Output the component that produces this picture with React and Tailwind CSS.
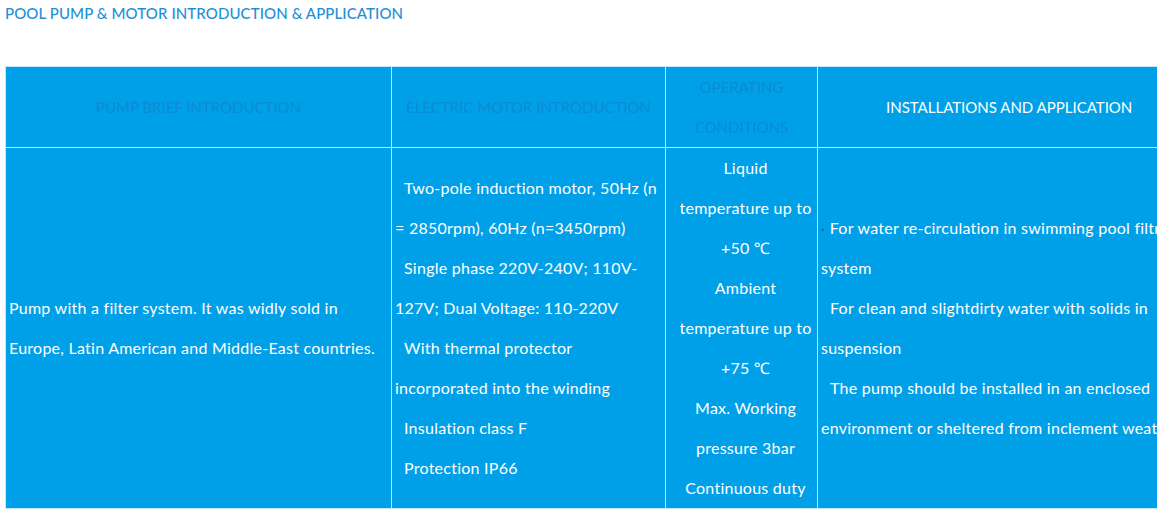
const FONT = { fontFamily: 'Lato, "Noto Sans", sans-serif' };

const motor = [
  'Two-pole induction motor, 50Hz (n = 2850rpm), 60Hz (n=3450rpm)',
  'Single phase 220V-240V; 110V-127V; Dual Voltage: 110-220V',
  'With thermal protector incorporated into the winding',
  'Insulation class F',
  'Protection IP66',
];

const install = [
  'For clean and slightdirty water with solids in suspension',
  'The pump should be installed in an enclosed environment or sheltered from inclement weather',
];

export default function App() {
  return (
    <div className="w-[1166px] h-[514px] bg-white overflow-hidden" style={FONT}>
      <h2 className="pl-[5px] pt-[3px] text-[15px] leading-[20px] font-medium text-[#1e8fd6] tracking-[0.1px]">
        POOL PUMP &amp; MOTOR INTRODUCTION &amp; APPLICATION
      </h2>

      <div className="mt-[43px] ml-[5px] w-[1152px] overflow-hidden">
        <table className="table-fixed border-collapse w-[1222px] bg-[#00a0e8] text-[16px] leading-[40px] text-white tracking-[0.25px]">
          <colgroup>
            <col className="w-[386px]" />
            <col className="w-[274px]" />
            <col className="w-[152px]" />
            <col className="w-[410px]" />
          </colgroup>
          <thead className="text-[15px] tracking-normal">
            <tr className="h-[81px]">
              <th className="border border-[#c6e6f8] font-normal text-[#0b8bd3] px-[4px]">PUMP BRIEF INTRODUCTION</th>
              <th className="border border-[#c6e6f8] font-normal text-[#0b8bd3] px-[4px]">ELECTRIC MOTOR INTRODUCTION</th>
              <th className="border border-[#c6e6f8] font-normal text-[#0b8bd3] px-[20px]">OPERATING CONDITIONS</th>
              <th className="border border-[#c6e6f8] font-normal px-[4px] text-left pl-[68px]">
                INSTALLATIONS AND APPLICATION
              </th>
            </tr>
          </thead>
          <tbody>
            <tr className="h-[361px]">
              <td className="border border-[#c6e6f8] align-middle px-[3px]">
                Pump with a filter system. It was widly sold in Europe, Latin American and Middle-East countries.
              </td>
              <td className="border border-[#c6e6f8] align-middle px-[3px]">
                {motor.map((t) => (
                  <p key={t} className="indent-[9px]">{t}</p>
                ))}
              </td>
              <td className="border border-[#c6e6f8] align-middle pl-[12px] pr-[4px] text-center">
                <p>Liquid temperature up to +50 ℃</p>
                <p>Ambient temperature up to +75 ℃</p>
                <p>Max. Working pressure 3bar</p>
                <p>Continuous duty</p>
              </td>
              <td className="border border-[#c6e6f8] align-middle px-[3px]">
                <p>
                  <span className="text-[#3d5f78]">·</span> For water re-circulation in swimming pool filtration system
                </p>
                {install.map((t) => (
                  <p key={t} className="indent-[9px]">{t}</p>
                ))}
              </td>
            </tr>
          </tbody>
        </table>
      </div>
    </div>
  );
}
